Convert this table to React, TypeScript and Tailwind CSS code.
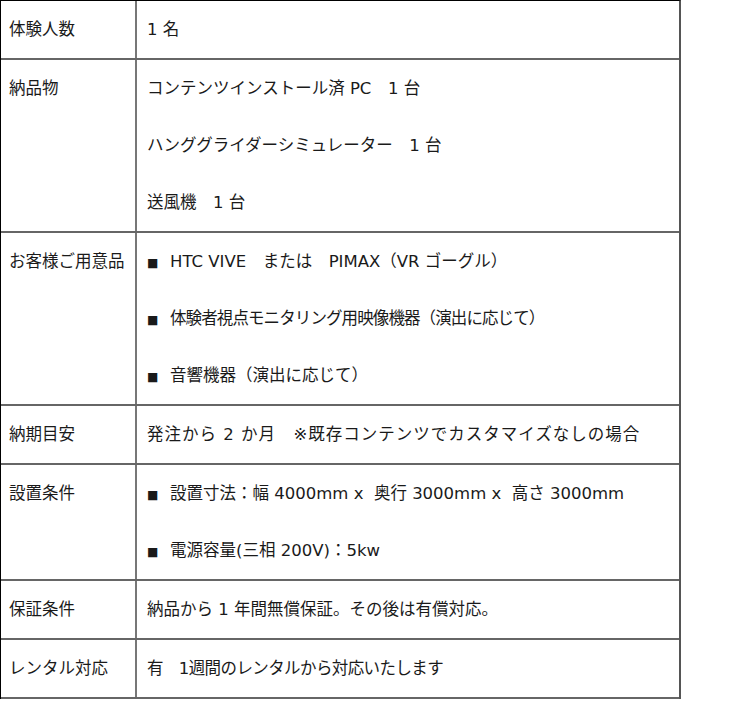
import React from 'react';

type Line = { text: string; bullet?: boolean; tracking?: string };

const rows: { label: string; lines: Line[] }[] = [
  { label: '体験人数', lines: [{ text: '1 名' }] },
  {
    label: '納品物',
    lines: [
      { text: 'コンテンツインストール済 PC　1 台' },
      { text: 'ハンググライダーシミュレーター　1 台' },
      { text: '送風機　1 台' },
    ],
  },
  {
    label: 'お客様ご用意品',
    lines: [
      { text: 'HTC VIVE　または　PIMAX（VR ゴーグル）', bullet: true },
      { text: '体験者視点モニタリング用映像機器（演出に応じて）', bullet: true, tracking: 'tracking-[-0.9px]' },
      { text: '音響機器（演出に応じて）', bullet: true },
    ],
  },
  {
    label: '納期目安',
    lines: [{ text: '発注から 2 か月　※既存コンテンツでカスタマイズなしの場合', tracking: 'tracking-[1px]' }],
  },
  {
    label: '設置条件',
    lines: [
      { text: '設置寸法：幅 4000mm x  奥行 3000mm x  高さ 3000mm', bullet: true },
      { text: '電源容量(三相 200V)：5kw', bullet: true },
    ],
  },
  { label: '保証条件', lines: [{ text: '納品から 1 年間無償保証。その後は有償対応。' }] },
  { label: 'レンタル対応', lines: [{ text: '有　1週間のレンタルから対応いたします', tracking: 'tracking-[-0.6px]' }] },
];

export default function App() {
  return (
    <div
      className="min-h-screen bg-white text-[#1a1a1a] text-[16.5px]"
      style={{ fontFamily: '"DejaVu Sans", "Noto Sans CJK JP", sans-serif' }}
    >
      <div className="w-[681px] border-t border-l border-black border-r-2 border-r-[#555]">
        {rows.map((row, i) => (
          <div key={i} className="flex border-b-2 border-[#666]">
            <div className="w-[136px] shrink-0 border-r-2 border-[#777]">
              <div className="h-[57px] flex items-center pl-[8px] pt-[2px]">{row.label}</div>
            </div>
            <div className="flex-1 flex flex-col">
              {row.lines.map((line, j) => (
                <div key={j} className={`h-[57px] flex items-center pl-[10px] pt-[2px] whitespace-pre ${line.tracking ?? ''}`}>
                  {line.bullet && <span className="w-[23px] shrink-0 text-[12px] leading-none tracking-normal">■</span>}
                  <span>{line.text}</span>
                </div>
              ))}
            </div>
          </div>
        ))}
      </div>
    </div>
  );
}
